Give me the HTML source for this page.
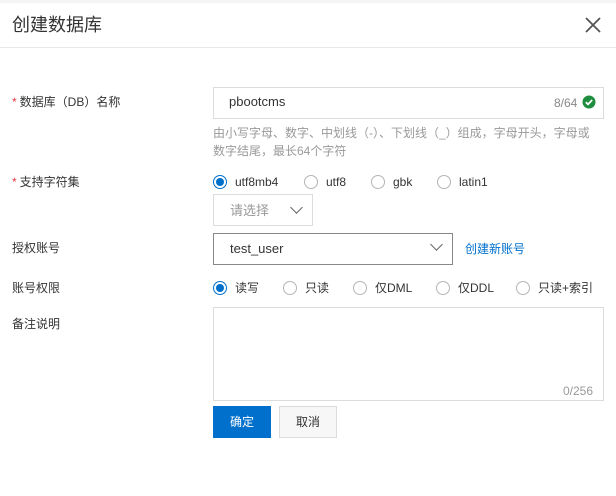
<!DOCTYPE html>
<html><head><meta charset="utf-8"><style>
*{margin:0;padding:0;box-sizing:border-box}
body{width:616px;height:496px;background:#fff;position:relative;overflow:hidden;font-family:"Liberation Sans","Noto Sans CJK SC",sans-serif;font-size:12px;color:#333}
.a{position:absolute;white-space:nowrap}
.lbl{position:absolute;left:12px;font-size:12px;color:#333;line-height:16px}
.req{color:#e4393c;margin-right:3px}
.box{position:absolute;border:1px solid #dcdcdc;background:#fff}
.r{position:absolute;width:14px;height:14px;border-radius:50%;border:1px solid #b5b5b5;background:#fff}
.r.on{border-color:#0070cc}
.r.on::after{content:"";position:absolute;left:2px;top:2px;width:8px;height:8px;border-radius:50%;background:#0070cc}
.rt{position:absolute;font-size:12px;color:#333;line-height:16px}
.chev{position:absolute;width:9px;height:9px;border-right:1.3px solid #666;border-bottom:1.3px solid #666;transform:rotate(45deg)}
</style></head><body>
<div class="a" style="left:0;top:0;width:616px;height:3px;background:#f5f5f5"></div>
<div class="a" style="left:12px;top:13px;font-size:18px;color:#333;line-height:24px">创建数据库</div>
<svg class="a" style="left:584px;top:16px" width="18" height="18" viewBox="0 0 18 18"><path d="M2 2L16 16M16 2L2 16" stroke="#555" stroke-width="1.8"/></svg>
<div class="a" style="left:0;top:47px;width:616px;height:1px;background:#e8e8e8"></div>

<div class="lbl" style="top:94px"><span class="req">*</span>数据库（DB）名称</div>
<div class="box" style="left:213px;top:87px;width:391px;height:32px"></div>
<div class="a" style="left:229px;top:94px;font-size:13px;line-height:16px">pbootcms</div>
<div class="a" style="left:554px;top:95px;color:#888;line-height:16px">8/64</div>
<svg class="a" style="left:582px;top:95px" width="14" height="14" viewBox="0 0 14 14"><circle cx="7" cy="7" r="6.5" fill="#1e8e3e"/><path d="M3.8 7.2L6 9.3L10.2 5" stroke="#fff" stroke-width="1.8" fill="none"/></svg>
<div class="a" style="left:213px;top:124px;color:#999;line-height:18px">由小写字母、数字、中划线（-）、下划线（_）组成，字母开头，字母或<br>数字结尾，最长64个字符</div>

<div class="lbl" style="top:174px"><span class="req">*</span>支持字符集</div>
<div class="r on" style="left:213px;top:175px"></div><div class="rt" style="left:235px;top:174px">utf8mb4</div>
<div class="r" style="left:304px;top:175px"></div><div class="rt" style="left:326px;top:174px">utf8</div>
<div class="r" style="left:371px;top:175px"></div><div class="rt" style="left:393px;top:174px">gbk</div>
<div class="r" style="left:437px;top:175px"></div><div class="rt" style="left:459px;top:174px">latin1</div>
<div class="box" style="left:213px;top:194px;width:100px;height:32px"></div>
<div class="a" style="left:230px;top:203px;color:#999;font-size:13px;line-height:16px">请选择</div>
<div class="chev" style="left:292px;top:203px"></div>

<div class="lbl" style="top:240px">授权账号</div>
<div class="box" style="left:213px;top:233px;width:240px;height:32px;border-color:#888"></div>
<div class="a" style="left:230px;top:241px;font-size:13px;line-height:16px">test_user</div>
<div class="chev" style="left:432px;top:240px"></div>
<div class="a" style="left:465px;top:241px;color:#0070cc;line-height:16px">创建新账号</div>

<div class="lbl" style="top:280px">账号权限</div>
<div class="r on" style="left:213px;top:281px"></div><div class="rt" style="left:235px;top:280px">读写</div>
<div class="r" style="left:283px;top:281px"></div><div class="rt" style="left:305px;top:280px">只读</div>
<div class="r" style="left:353px;top:281px"></div><div class="rt" style="left:375px;top:280px">仅DML</div>
<div class="r" style="left:436px;top:281px"></div><div class="rt" style="left:458px;top:280px">仅DDL</div>
<div class="r" style="left:516px;top:281px"></div><div class="rt" style="left:538px;top:280px">只读+索引</div>

<div class="lbl" style="top:316px">备注说明</div>
<div class="box" style="left:213px;top:307px;width:391px;height:94px"></div>
<div class="a" style="left:563px;top:383px;color:#999;line-height:16px">0/256</div>

<div class="a" style="left:213px;top:406px;width:58px;height:32px;background:#0070cc;color:#fff;text-align:center;line-height:32px">确定</div>
<div class="a" style="left:279px;top:406px;width:58px;height:32px;background:#f7f7f7;border:1px solid #dcdcdc;color:#333;text-align:center;line-height:30px">取消</div>
</body></html>
